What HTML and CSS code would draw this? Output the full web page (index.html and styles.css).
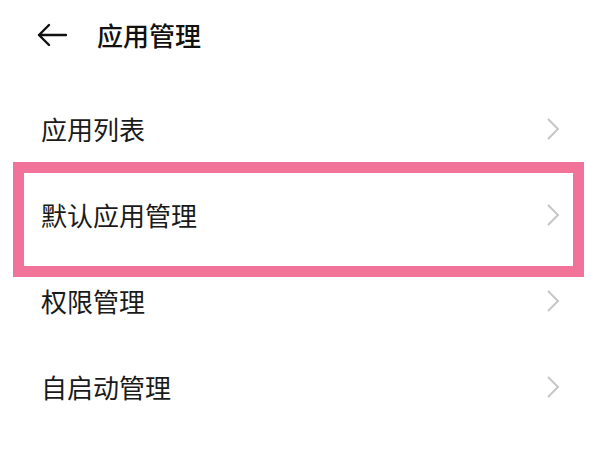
FILE: index.html
```html
<!DOCTYPE html>
<html lang="zh-CN">
<head>
<meta charset="utf-8">
<link rel="stylesheet" href="styles.css">
</head>
<body>
<div class="page">
  <header class="header">
    <svg class="back" width="30" height="24" viewBox="0 0 30 24">
      <path d="M12 2 L2 12 L12 22 M2 12 H29" fill="none" stroke="#111" stroke-width="2.4" stroke-linecap="round" stroke-linejoin="round"/>
    </svg>
    <h1 class="title">应用管理</h1>
  </header>
  <ul class="list">
    <li class="row"><span class="label">应用列表</span><svg class="chev" width="14" height="24" viewBox="0 0 14 24"><path d="M2 2 L12 12 L2 22" fill="none" stroke="#c6c6c6" stroke-width="2"/></svg></li>
    <li class="row"><span class="label">默认应用管理</span><svg class="chev" width="14" height="24" viewBox="0 0 14 24"><path d="M2 2 L12 12 L2 22" fill="none" stroke="#c6c6c6" stroke-width="2"/></svg><div class="highlight"></div></li>
    <li class="row"><span class="label">权限管理</span><svg class="chev" width="14" height="24" viewBox="0 0 14 24"><path d="M2 2 L12 12 L2 22" fill="none" stroke="#c6c6c6" stroke-width="2"/></svg></li>
    <li class="row"><span class="label">自启动管理</span><svg class="chev" width="14" height="24" viewBox="0 0 14 24"><path d="M2 2 L12 12 L2 22" fill="none" stroke="#c6c6c6" stroke-width="2"/></svg></li>
  </ul>
</div>
</body>
</html>
```
FILE: styles.css
```css
html, body {
  margin: 0;
  padding: 0;
  background: #ffffff;
}
.page {
  width: 600px;
  height: 450px;
  overflow: hidden;
  font-family: "Noto Sans CJK SC", "Noto Sans", sans-serif;
  color: #1a1a1a;
}
.header {
  height: 70px;
  display: flex;
  align-items: center;
  padding-left: 37px;
}
.back {
  display: block;
}
.title {
  margin: 0 0 0 30px;
  font-size: 26px;
  font-weight: 500;
  line-height: 1;
  color: #111;
}
.list {
  list-style: none;
  margin: 16px 0 0 0;
  padding: 0;
}
.row {
  position: relative;
  height: 86px;
  display: flex;
  align-items: center;
  justify-content: space-between;
  padding: 0 40px 0 41px;
}
.label {
  font-size: 26px;
  line-height: 1;
  color: #1a1a1a;
}
.chev {
  display: block;
}
.highlight {
  position: absolute;
  top: -10px;
  bottom: -19px;
  left: 13px;
  right: 16px;
  border: 11px solid #f2739a;
}
```
